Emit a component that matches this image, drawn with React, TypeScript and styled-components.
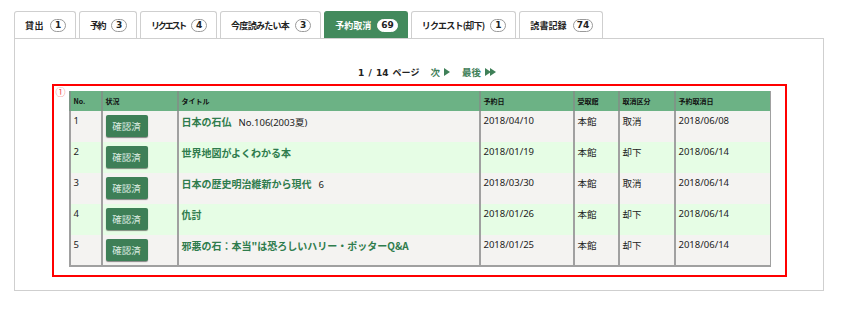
import React from "react";
import styled, { createGlobalStyle } from "styled-components";

const Global = createGlobalStyle`
  html, body { margin: 0; padding: 0; background: #fff; }
  body { font-family: "Noto Sans", "Noto Sans CJK JP", sans-serif; color: #222; }
`;

const Page = styled.div`
  padding: 11px 19px 0 14px;
  width: 810px;
`;

const TabBar = styled.div`
  display: flex;
  gap: 3px;
  height: 27px;
`;

const Tab = styled.div<{ $active?: boolean }>`
  display: flex;
  align-items: center;
  gap: 6px;
  padding: 0 9px 0 10px;
  border: 1px solid ${(p) => (p.$active ? "#438a5d" : "#cfcfcf")};
  border-bottom: none;
  border-radius: 3px 3px 0 0;
  background: ${(p) => (p.$active ? "#438a5d" : "#fff")};
  color: ${(p) => (p.$active ? "#fff" : "#222")};
  font-family: "Noto Sans CJK JP", sans-serif;
  font-weight: 700;
  font-size: 9px;
  white-space: nowrap;
  box-sizing: border-box;
`;

const TabLabel = styled.span<{ $ls: number }>`
  letter-spacing: ${(p) => p.$ls}px;
`;

const Badge = styled.span<{ $active?: boolean }>`
  display: inline-flex;
  align-items: center;
  justify-content: center;
  min-width: 16px;
  height: 13px;
  padding: 0 3px;
  box-sizing: border-box;
  border-radius: 7px;
  border: 1px solid ${(p) => (p.$active ? "#fff" : "#9a9a9a")};
  background: #fff;
  color: #222;
  font-family: "DejaVu Sans", sans-serif;
  font-weight: 700;
  font-size: 9px;
`;

const Panel = styled.div`
  border: 1px solid #cfcfcf;
  height: 253px;
  box-sizing: border-box;
  padding-top: 25px;
`;

const Pager = styled.div`
  display: flex;
  justify-content: center;
  align-items: center;
  gap: 11px;
  height: 16px;
  padding-left: 16px;
  font-family: "Noto Sans CJK JP", sans-serif;
  font-weight: 700;
  font-size: 9.5px;
`;

const PageCount = styled.span`
  color: #222;
  font-family: "DejaVu Sans", "Noto Sans CJK JP", sans-serif;
  font-size: 9px;
  word-spacing: 1px;
`;

const PageUnit = styled.span`
  font-family: "Noto Sans CJK JP", sans-serif;
`;

const PageLink = styled.span`
  display: inline-flex;
  align-items: center;
  gap: 4px;
  color: #3f8058;
`;

const Marked = styled.div`
  position: relative;
  width: 735px;
  margin: 4px auto 0;
  box-sizing: border-box;
  border: 2px solid #ff0000;
  padding: 5px 15px 8px 15px;
`;

const Note = styled.span`
  position: absolute;
  left: 2px;
  top: -2px;
  color: #f05050;
  font-size: 10px;
  font-family: "Noto Sans CJK JP", sans-serif;
`;

const Table = styled.table`
  width: 701px;
  border-collapse: collapse;
  table-layout: fixed;
  border-right: 1px solid #a0a0a0;
  border-bottom: 2px solid #a0a0a0;
`;

const Th = styled.th<{ $w: number }>`
  width: ${(p) => p.$w}px;
  height: 20px;
  box-sizing: border-box;
  background: #6cb285;
  border-left: 2px solid #7d9686;
  text-align: left;
  padding: 0 3px;
  font-family: "Noto Sans CJK JP", sans-serif;
  font-weight: 700;
  font-size: 7px;
  color: #111;
`;

const Row = styled.tr<{ $alt: boolean }>`
  background: ${(p) => (p.$alt ? "#e6fde5" : "#f4f3f1")};
`;

const Td = styled.td`
  height: 31px;
  box-sizing: border-box;
  vertical-align: top;
  padding: 3px 2px 0 3px;
  border-left: 2px solid #a0a0a0;
  font-size: 9.5px;
  color: #222;
  white-space: nowrap;
  overflow: hidden;
`;

const StatusButton = styled.span`
  display: inline-flex;
  align-items: center;
  justify-content: center;
  width: 42px;
  height: 22px;
  margin-top: 1px;
  border-radius: 2px;
  background: #3e7f57;
  box-shadow: 0 1px 1px rgba(0, 0, 0, 0.45);
  color: #dfeee3;
  font-family: "Noto Sans CJK JP", sans-serif;
  font-size: 9.5px;
`;

const TitleLink = styled.span`
  color: #2f7c4d;
  font-weight: 700;
  font-size: 10px;
  font-family: "Noto Sans CJK JP", sans-serif;
`;

const TitleExtra = styled.span`
  margin-left: 7px;
  color: #222;
`;

const Tri = ({ double }: { double?: boolean }) => (
  <svg width={double ? 11 : 7} height="8" viewBox={double ? "0 0 11 8" : "0 0 7 8"}>
    <polygon points="0,0 6,4 0,8" fill="#3f8058" />
    {double && <polygon points="5,0 11,4 5,8" fill="#3f8058" />}
  </svg>
);

const tabs: [string, string, number][] = [
  ["貸出", "1", 0.5],
  ["予約", "3", -1.5],
  ["リクエスト", "4", -2.2],
  ["今度読みたい本", "3", -0.7],
  ["予約取消", "69", 0],
  ["リクエスト(却下)", "1", -0.8],
  ["読書記録", "74", 0.1],
];

const cols: [string, number][] = [
  ["No.", 32],
  ["状況", 76],
  ["タイトル", 302],
  ["予約日", 94],
  ["受取館", 45],
  ["取消区分", 56],
  ["予約取消日", 96],
];

const rows = [
  { t: "日本の石仏", x: "No.106(2003夏)", d: "2018/04/10", k: "取消", c: "2018/06/08" },
  { t: "世界地図がよくわかる本", x: "", d: "2018/01/19", k: "却下", c: "2018/06/14" },
  { t: "日本の歴史明治維新から現代", x: "6", d: "2018/03/30", k: "取消", c: "2018/06/14" },
  { t: "仇討", x: "", d: "2018/01/26", k: "却下", c: "2018/06/14" },
  { t: "邪悪の石：本当\"は恐ろしいハリー・ポッターQ&A", x: "", d: "2018/01/25", k: "却下", c: "2018/06/14" },
];

export default function App() {
  return (
    <>
      <Global />
      <Page>
        <TabBar>
          {tabs.map(([l, n, ls]) => {
            const a = l === "予約取消";
            return (
              <Tab key={l} $active={a}>
                <TabLabel $ls={ls}>{l}</TabLabel>
                <Badge $active={a}>{n}</Badge>
              </Tab>
            );
          })}
        </TabBar>
        <Panel>
          <Pager>
            <PageCount>
              1 / 14 <PageUnit>ページ</PageUnit>
            </PageCount>
            <PageLink>
              次 <Tri />
            </PageLink>
            <PageLink>
              最後 <Tri double />
            </PageLink>
          </Pager>
          <Marked>
            <Note>①</Note>
            <Table>
              <thead>
                <tr>
                  {cols.map(([h, w]) => (
                    <Th key={h} $w={w}>
                      {h}
                    </Th>
                  ))}
                </tr>
              </thead>
              <tbody>
                {rows.map((r, i) => (
                  <Row key={i} $alt={i % 2 === 1}>
                    <Td>{i + 1}</Td>
                    <Td>
                      <StatusButton>確認済</StatusButton>
                    </Td>
                    <Td>
                      <TitleLink>{r.t}</TitleLink>
                      {r.x && <TitleExtra>{r.x}</TitleExtra>}
                    </Td>
                    <Td>{r.d}</Td>
                    <Td>本館</Td>
                    <Td>{r.k}</Td>
                    <Td>{r.c}</Td>
                  </Row>
                ))}
              </tbody>
            </Table>
          </Marked>
        </Panel>
      </Page>
    </>
  );
}
